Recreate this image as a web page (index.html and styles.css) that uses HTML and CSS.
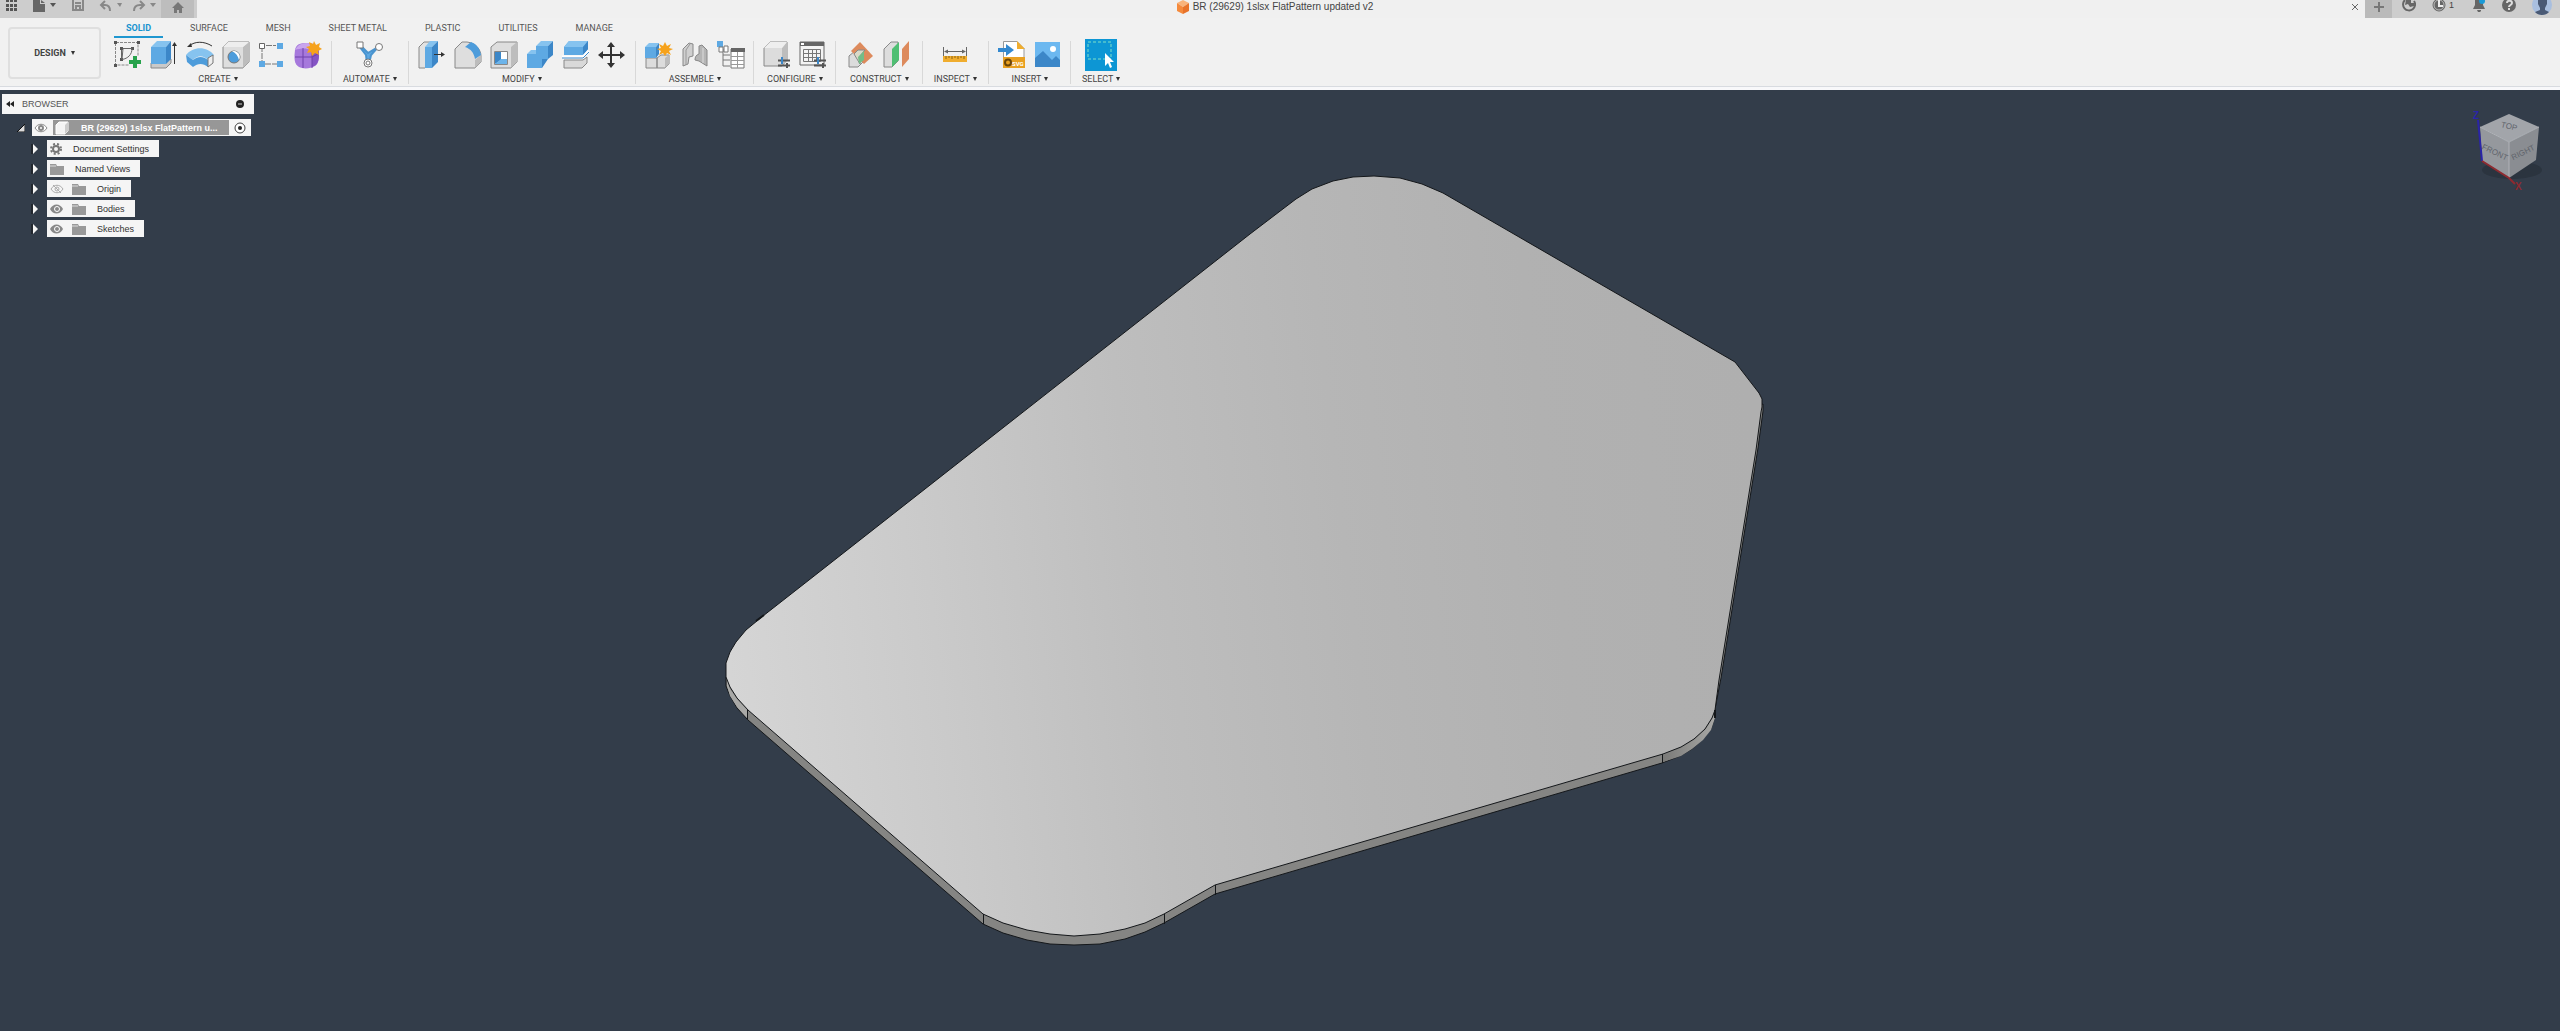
FILE: index.html
```html
<!DOCTYPE html>
<html lang="en">
<head>
<meta charset="utf-8">
<title>BR (29629) 1slsx FlatPattern updated v2</title>
<link rel="stylesheet" href="styles.css">
</head>
<body>
<header class="appbar">
  <div class="quick">
    <button class="tool" aria-label="Data panel"><svg width="14" height="18" viewBox="0 0 14 18" fill="#555"><path d="M1 0h3v2H1zM5 0h3v2H5zM9 0h3v2H9zM1 4h3v3H1zM5 4h3v3H5zM9 4h3v3H9zM1 8h3v3H1zM5 8h3v3H5zM9 8h3v3H9z"/></svg></button>
    <button class="tool" aria-label="File"><svg width="26" height="18" viewBox="0 0 26 18" fill="#666"><path d="M1 0h7v4h5v8H1zM9 0l4 3H9z"/><path d="M18 3h6l-3 4z" fill="#555"/></svg></button>
    <button class="tool" aria-label="Save"><svg width="14" height="18" viewBox="0 0 14 18" fill="none" stroke="#888" stroke-width="2"><path d="M2 0v10h10V0M4 3h6M5 10V6h4v4"/></svg></button>
    <div class="history">
      <button class="tool" aria-label="Undo"><svg width="26" height="18" viewBox="0 0 26 18"><path d="M7 1L3 5l4 4M3 5h4c4 0 5 2 5 6" fill="none" stroke="#888" stroke-width="2"/><path d="M19 3h5l-2 4z" fill="#888"/></svg></button>
      <button class="tool" aria-label="Redo"><svg width="26" height="18" viewBox="0 0 26 18"><path d="M8 1l4 4-4 4M12 5H8c-4 0-6 2-6 6" fill="none" stroke="#888" stroke-width="2"/><path d="M18 3h6l-3 4z" fill="#888"/></svg></button>
    </div>
  </div>
  <button class="home" aria-label="Home"><svg width="14" height="18" viewBox="0 0 14 18" fill="#777"><path d="M7 2l6 6h-2v5H8v-3H6v3H3V8H1z"/></svg></button>
  <div class="doc">
    <svg width="12" height="14" viewBox="0 0 12 14"><path d="M0 3l6-3 6 3-6 4z" fill="#f9b37a"/><path d="M0 3l6 4v7l-6-3z" fill="#f58a3c"/><path d="M12 3L6 7v7l6-3z" fill="#e8732a"/></svg>
    <h1 class="doc-name">BR (29629) 1slsx FlatPattern updated v2</h1>
  </div>
  <button class="close" aria-label="Close document"><svg width="8" height="8" viewBox="0 0 8 8" stroke="#666" fill="none"><path d="M1 1l6 6M7 1L1 7"/></svg></button>
  <button class="new" aria-label="New design"><svg width="12" height="12" viewBox="0 0 12 12" stroke="#777" stroke-width="2"><path d="M6 1v10M1 6h10"/></svg></button>
  <div class="account">
    <button class="tool" aria-label="Extensions"><svg width="14" height="18" viewBox="0 0 14 18"><path d="M3 0a6 6 0 1 0 9 1" fill="none" stroke="#666" stroke-width="2"/><path d="M4 0h5v3h3v3l-4 1-2-3-3 1z" fill="#666"/></svg></button>
    <button class="tool jobs" aria-label="Job status"><svg width="14" height="18" viewBox="0 0 14 18"><circle cx="7" cy="5" r="6" fill="#666" stroke="#666"/><circle cx="7" cy="5" r="5" fill="none" stroke="#bbb"/><path d="M7 0v6h4" fill="none" stroke="#eee" stroke-width="2"/></svg>1</button>
    <button class="tool" aria-label="Notifications"><svg width="14" height="18" viewBox="0 0 14 18"><path d="M3 0h8v5l2 4H1l2-4zM5 10h4v1l-1 1H6z" fill="#666"/><circle cx="10" cy="1" r="3" fill="#1a9ad7"/></svg></button>
    <button class="tool" aria-label="Help"><svg width="14" height="18" viewBox="0 0 14 18"><circle cx="7" cy="5" r="7" fill="#666"/><path d="M5 3c0-3 5-3 5 0 0 2-3 2-3 4M7 8v2" fill="none" stroke="#ddd" stroke-width="2"/></svg></button>
    <button class="tool" aria-label="Account"><svg width="20" height="18" viewBox="0 0 20 18"><circle cx="10" cy="5" r="10" fill="#a9bfdf"/><path d="M6 0h9v4l-2 4v2l4 2c-3 4-11 4-14 0l5-2V8L6 4z" fill="#4a5a75"/></svg></button>
  </div>
</header>

<section class="ribbon">
  <button class="workspace">DESIGN <span class="caret"></span></button>
  <div class="ribbon-main">
    <nav class="tabs">
      <a class="tab active" href="#solid">SOLID</a>
      <a class="tab" href="#surface">SURFACE</a>
      <a class="tab" href="#mesh">MESH</a>
      <a class="tab" href="#sheet">SHEET METAL</a>
      <a class="tab" href="#plastic">PLASTIC</a>
      <a class="tab" href="#utilities">UTILITIES</a>
      <a class="tab" href="#manage">MANAGE</a>
    </nav>
    <div class="groups">
      <div class="group roomy">
        <div class="icons">
          <button class="tool" aria-label="Create sketch"><svg width="28" height="28" viewBox="0 0 28 28"><path d="M2 1.500h22v14M1.500 2v22h14" fill="none" stroke="#888" stroke-dasharray="3 1"/><g fill="#555"><path d="M0 0h3v3H0zM23 0h3v3h-3zM0 23h3v3H0zM6 6h3v3H6zM17 6h3v3h-3zM6 17h3v3H6z"/></g><path d="M9 7.500h9c0 6-4 10-10 11zM7.500 9v9" fill="none" stroke="#666"/><path d="M19 15h4v4h4v4h-4v4h-4v-4h-4v-4h4z" fill="#27a34c"/></svg></button>
          <button class="tool" aria-label="Extrude"><svg width="28" height="28" viewBox="0 0 28 28"><path d="M1 22v5h15l5-5v-4H5z" fill="#c9c9c9" stroke="#888"/><path d="M1 6h15v17H1z" fill="#5ea9e3"/><path d="M1 6l6-6h14l-5 6z" fill="#86c3ef"/><path d="M16 6l5-6v18l-5 5z" fill="#3c87c8"/><path d="M24.500 23V3" stroke="#333" fill="none"/><path d="M22 5l2.500-4L27 5z" fill="#333"/></svg></button>
          <button class="tool" aria-label="Revolve"><svg width="28" height="28" viewBox="0 0 28 28"><path d="M3 5C9 0 18 0 26 5" fill="none" stroke="#333"/><path d="M1 6l4-4 1 4z" fill="#333"/><path d="M0 14c7-9 21-9 28 0l-6 5c-5-5-10-5-15 0z" fill="#86c3ef"/><path d="M0 14l7 5v7l-6-5zM7 19c5-4 10-4 15 0v7c-5-4-10-4-15 0z" fill="#4d9cdb"/><path d="M22 17l5-3v8l-5 4z" fill="#eee" stroke="#777"/></svg></button>
          <button class="tool" aria-label="Hole"><svg width="28" height="28" viewBox="0 0 28 28"><path d="M1 6l5-5h21v20l-6 6H1z" fill="#dedede" stroke="#888"/><path d="M21 6l6-5v20l-6 6z" fill="#bdbdbd"/><path d="M1 6l5-5h21l-6 5z" fill="#eee"/><circle cx="12" cy="16" r="6" fill="#4d9cdb" stroke="#777"/><path d="M12 10a6 6 0 0 1 5 9c-1-4-3-7-7-9z" fill="#fff"/></svg></button>
          <button class="tool" aria-label="Rectangular pattern"><svg width="28" height="28" viewBox="0 0 28 28"><path d="M4 5v18h18M8 4.500h10" fill="none" stroke="#777" stroke-dasharray="6 1"/><path d="M1.500 2.500h5v5h-5z" fill="#fff" stroke="#666"/><path d="M19 2h6v6h-6zM1 20h6v6H1zM19 20h6v6h-6z" fill="#5ea9e3"/></svg></button>
          <button class="tool" aria-label="Create form"><svg width="28" height="28" viewBox="0 0 28 28"><path d="M1 9c1-6 5-7 12-7s12 2 12 8c0 8 0 12-4 15-5 3-12 3-16 1-5-3-5-9-4-17z" fill="#a678dc"/><path d="M3 6c5-6 14-4 18-2l-3 5C12 7 7 7 1 9z" fill="#c9a5ee"/><path d="M18 9l4-4c4 5 4 14 0 19l-4 2z" fill="#8554c4"/><path d="M9 7v20M1 16h17l6-3M18 8v19" fill="none" stroke="#6e41ac"/><path d="M20 0l2 4 4-2-1 4 3 2-4 2 1 4-4-2-3 3-1-4-4 1 2-4-3-2 4-1-1-4 4 2z" fill="#f6a21b"/></svg></button>
        </div>
        <button class="label">CREATE <span class="caret"></span></button>
      </div>
      <div class="group mid roomy">
        <div class="icons">
          <button class="tool" aria-label="Automated modeling"><svg width="28" height="28" viewBox="0 0 28 28"><path d="M4 4l8 8 10-6-7 8-2 9h-2l-1-9-7-9z" fill="#5ea9e3" stroke="#4a94cf" stroke-width="2" stroke-linejoin="round"/><path d="M1 1h6v6H1z" fill="#fff" stroke="#777"/><circle cx="23" cy="6" r="3.500" fill="#fff" stroke="#777"/><circle cx="12" cy="22" r="4" fill="#fff" stroke="#777"/><circle cx="12" cy="22" r="2" fill="#fff" stroke="#777"/></svg></button>
        </div>
        <button class="label">AUTOMATE <span class="caret"></span></button>
      </div>
      <div class="group roomy">
        <div class="icons">
          <button class="tool" aria-label="Press pull"><svg width="28" height="28" viewBox="0 0 28 28"><path d="M1 6l5-5h7v20l-6 6H1z" fill="#e2e2e2" stroke="#888"/><path d="M7 6h7v21H7z" fill="#5ea9e3"/><path d="M7 6l5-6h8l-6 6z" fill="#86c3ef"/><path d="M14 6l6-6v21l-6 6z" fill="#3c87c8"/><path d="M16 13.500h8" stroke="#333"/><path d="M23 11l4 2.500-4 2.500z" fill="#333"/></svg></button>
          <button class="tool" aria-label="Fillet"><svg width="28" height="28" viewBox="0 0 28 28"><path d="M1 8l7-7h5c9 1 14 8 14 14v6l-6 6H1z" fill="#dedede" stroke="#888"/><path d="M21 19l6-5v7l-6 6z" fill="#bcbcbc"/><path d="M11 6l6-5c6 2 9 7 10 13l-6 4c-1-6-4-10-10-12z" fill="#4d9cdb"/></svg></button>
          <button class="tool" aria-label="Shell"><svg width="28" height="28" viewBox="0 0 28 28"><path d="M1 6l6-5h20v20l-6 6H1z" fill="#dedede" stroke="#888"/><path d="M21 6l6-5v20l-6 6z" fill="#bdbdbd"/><path d="M4.500 10.500h13v13h-13z" fill="#fff" stroke="#888"/><path d="M5 11h6v8l-6 4z" fill="#3c87c8"/><path d="M5 23l6-5h6v5z" fill="#6cb4ea"/></svg></button>
          <button class="tool" aria-label="Combine"><svg width="28" height="28" viewBox="0 0 28 28"><path d="M1 13h9V5h12v13h-6v9H1z" fill="#5ea9e3"/><path d="M10 5l5-5h12l-5 5zM1 13l4-4h5v4z" fill="#86c3ef"/><path d="M22 5l5-5v14l-5 4zM16 18h6l-6 9z" fill="#3c87c8"/></svg></button>
          <button class="tool" aria-label="Split body"><svg width="28" height="28" viewBox="0 0 28 28"><path d="M2 19h19l4-3v6l-5 5H2z" fill="#d9d9d9" stroke="#888"/><path d="M2 6l5-6h19v8l-5 6H2z" fill="#5ea9e3"/><path d="M2 6l5-6h19l-5 6z" fill="#86c3ef"/><path d="M21 6l5-6v8l-5 6z" fill="#3c87c8"/><path d="M0 16h21l6-6" fill="none" stroke="#fff" stroke-width="3"/><path d="M0 17h21l6-6" fill="none" stroke="#3c87c8"/></svg></button>
          <button class="tool" aria-label="Move"><svg width="28" height="28" viewBox="0 0 28 28"><path d="M13 3v21M3 14h21" stroke="#333" stroke-width="2"/><path d="M9 6l4-5 4 5zM9 22l4 5 4-5zM5 10l-5 4 5 4zM22 10l5 4-5 4z" fill="#333"/></svg></button>
        </div>
        <button class="label">MODIFY <span class="caret"></span></button>
      </div>
      <div class="group">
        <div class="icons">
          <button class="tool" aria-label="New component"><svg width="28" height="28" viewBox="0 0 28 28"><path d="M1 17h11v10H1zM12 17l4-3h8v9l-4 4h-8z" fill="#dcdcdc" stroke="#888"/><path d="M20 17l4-3v9l-4 4z" fill="#bbb"/><path d="M0 6h11v11H0z" fill="#5ea9e3"/><path d="M0 6l4-4h10l-3 4z" fill="#86c3ef"/><path d="M11 6l3-4v11l-3 4z" fill="#3c87c8"/><path d="M20 1l2 4 4-2-2 4 4 1-4 2 2 4-4-2-2 3-2-3-4 2 2-4-4-2 4-1-2-4 4 2z" fill="#f6a21b"/></svg></button>
          <button class="tool" aria-label="Joint"><svg width="28" height="28" viewBox="0 0 28 28"><path d="M2 25V8l6-6 4 1v12l-4 1-1 7z" fill="#cfcfcf" stroke="#888"/><path d="M26 25V9l-5-5-3 1v8c-3 1-4 3-4 6l4 1z" fill="#b5b5b5" stroke="#888"/><path d="M5 24V9l4-6" fill="none" stroke="#999"/><path d="M22 22V7" stroke="#ddd"/></svg></button>
          <button class="tool" aria-label="Bill of materials"><svg width="28" height="28" viewBox="0 0 28 28"><path d="M6 8v17h7M6 14h7M6 19h7" fill="none" stroke="#777"/><path d="M0 0h6v6H0z" fill="#5ea9e3"/><path d="M2 6h4v5H2zM7 5h4v6H7z" fill="#fff" stroke="#777"/><path d="M14 8h13v19H14z" fill="#fff" stroke="#777"/><path d="M14 7h14v4H14z" fill="#666"/><path d="M14 15.500h13M14 19.500h13M14 23.500h13M20.500 11v16" stroke="#999"/></svg></button>
        </div>
        <button class="label">ASSEMBLE <span class="caret"></span></button>
      </div>
      <div class="group">
        <div class="icons">
          <button class="tool" aria-label="Configure model"><svg width="28" height="28" viewBox="0 0 28 28"><path d="M1 7l6-6h17v18l-5 6H1z" fill="#dcdcdc" stroke="#888"/><path d="M19 7l5-6v18l-5 6z" fill="#bdbdbd"/><path d="M1 7l6-6h17l-5 6z" fill="#eee"/><path d="M15 19.500h12M15 24.500h12" stroke="#555" stroke-width="2"/><path d="M19 16v7" stroke="#3c87c8" stroke-width="2"/><path d="M24 22v5" stroke="#555" stroke-width="2"/></svg></button>
          <button class="tool" aria-label="Configuration table"><svg width="28" height="28" viewBox="0 0 28 28"><path d="M1 1h24v23H1z" fill="#f4f4f4" stroke="#666"/><path d="M1 1h24v4H1z" fill="#666"/><path d="M2 2h3v2H2z" fill="#fff"/><path d="M4.500 8.500h17v12h-17zM4 12.500h18M4 16.500h18M9.500 8v12M13.500 8v12M17.500 8v12" fill="none" stroke="#777"/><path d="M15 19.500h12M15 24.500h12" stroke="#555" stroke-width="2"/><path d="M19 16v7" stroke="#3c87c8" stroke-width="2"/><path d="M24 22v5" stroke="#555" stroke-width="2"/></svg></button>
        </div>
        <button class="label">CONFIGURE <span class="caret"></span></button>
      </div>
      <div class="group wide">
        <div class="icons">
          <button class="tool" aria-label="Offset plane"><svg width="28" height="28" viewBox="0 0 28 28"><path d="M2 15l6-5h8v11l-5 5H2z" fill="#dcdcdc" stroke="#888"/><path d="M4 10L13 1l13 14-9 8z" fill="#dd8a5c"/><path d="M7 13l4-4h7l-5 6v8z" fill="#d9d9c8" stroke="#888"/><path d="M11 16l6-6v9l-5 4z" fill="#74bd88"/></svg></button>
          <button class="tool" aria-label="Midplane"><svg width="28" height="28" viewBox="0 0 28 28"><path d="M1 8l7-7h7v19l-6 6H1z" fill="#ddd" stroke="#888"/><path d="M9 8l7-7v18l-7 7z" fill="#4fbf73"/><path d="M19 8l7-8v18l-7 8z" fill="#dd8a5c"/></svg></button>
        </div>
        <button class="label">CONSTRUCT <span class="caret"></span></button>
      </div>
      <div class="group mid">
        <div class="icons">
          <button class="tool" aria-label="Measure"><svg width="28" height="28" viewBox="0 0 28 28"><path d="M2.500 6v9M25.500 6v9M4 10.500h20" stroke="#666"/><path d="M3 10.500l4-2v4zM25 10.500l-4-2v4z" fill="#666"/><path d="M2 15h24v6H2z" fill="#f0ad2e"/><path d="M5 15v3M8 15v2M11 15v3M14 15v2M17 15v3M20 15v2M23 15v3" stroke="#8c6310"/></svg></button>
        </div>
        <button class="label">INSPECT <span class="caret"></span></button>
      </div>
      <div class="group">
        <div class="icons">
          <button class="tool" aria-label="Insert SVG"><svg width="28" height="28" viewBox="0 0 28 28"><path d="M5.500.500H19l7 7V26H5.500z" fill="#fff" stroke="#999"/><path d="M19 0v8h8z" fill="#f0ad2e"/><path d="M0 7h8V3l8 6-8 6v-4H0z" fill="#3489cf"/><path d="M5 16h22v11H5z" fill="#e9a020"/><circle cx="10" cy="21.500" r="3" fill="none" stroke="#6b4608" stroke-width="2"/><text class="svg-tag" x="14" y="25">SVG</text></svg></button>
          <button class="tool" aria-label="Canvas"><svg width="28" height="28" viewBox="0 0 28 28"><path d="M1 1h25v25H1z" fill="#6cb8f0"/><path d="M1 17l8-7 9 9 4-4 4 4v7H1z" fill="#3c87c8"/><circle cx="19" cy="8" r="3" fill="#fff"/></svg></button>
        </div>
        <button class="label">INSERT <span class="caret"></span></button>
      </div>
      <div class="group mid last">
        <div class="icons">
          <button class="tool select" aria-label="Select"><svg width="32" height="32" viewBox="0 0 32 32"><path d="M0 0h32v32H0z" fill="#0d96d4"/><path d="M3 3h23v17H3z" fill="none" stroke="#7fe0c8" stroke-dasharray="3 2"/><path d="M20 14v13l3-3 2 5 2-1-2-5h4z" fill="#fff"/></svg></button>
        </div>
        <button class="label">SELECT <span class="caret"></span></button>
      </div>
    </div>
  </div>
</section>

<main class="viewport">
  <svg class="model" viewBox="0 90 2560 941" role="img" aria-label="Flat pattern body">
    <defs>
      <linearGradient id="face" gradientUnits="userSpaceOnUse" x1="727" y1="650" x2="1762" y2="530">
        <stop offset="0" stop-color="#d5d5d5"/><stop offset="0.200" stop-color="#cacaca"/><stop offset="0.400" stop-color="#bebebe"/><stop offset="0.600" stop-color="#b6b6b6"/><stop offset="0.800" stop-color="#b1b1b1"/><stop offset="1" stop-color="#afafaf"/>
      </linearGradient>
      <linearGradient id="round" x1="0" x2="1"><stop offset="0" stop-color="#7a7a78"/><stop offset="1" stop-color="#a8a8a6"/></linearGradient>
    </defs>
    <g stroke="#14171a" stroke-width="1" stroke-linejoin="round">
      <path fill="#858583" d="M726 677v9l4 10 7 12 11 12 235 204 20 9 24 7 23 4 24 1 26-1 25-5 20-7 19-9 51-29 447-131 18-7 12-7 11-10 8-10 4-12v-8l6-31 37-230 5-37V404z"/>
      <path fill="#a9a9a7" stroke="none" d="M727 679l3 10 7 10 11 12v8l-11-12-7-11-3-10z"/>
      <path fill="url(#round)" stroke="none" d="M1663 755l18-7 13-8 11-10 7-11 3-6v5l-4 12-8 10-11 9-11 7-18 6z"/>
      <path fill="url(#face)" d="M763 616l-17 14-10 12-6 10-4 11v14l4 10 7 11 11 12 235 204 20 9 24 7 23 4 24 2 26-2 25-5 20-6 19-9 51-29 448-131 18-7 13-8 11-10 7-11 3-8 4-30 37-230 5-38 1-5v-8l-3-6-24-31-292-169-21-9-22-6-26-2-21 1-20 4-21 8-16 10-46 35-441 346z"/>
      <path fill="none" d="M747.500 710v10M983.500 914v10M1164.500 914v10M1215.500 885v10M1662.500 754v9"/>
      <path fill="none" stroke-width="2" d="M756 621l8-6M1715 710v8"/>
    </g>
  </svg>

  <aside class="browser">
    <div class="browser-head">
      <button class="tool" aria-label="Collapse"><svg width="8" height="6" viewBox="0 0 8 6" fill="#222"><path d="M4 0v6L0 3zM8 0v6L4 3z"/></svg></button>
      <h2 class="browser-title">BROWSER</h2>
      <button class="tool" aria-label="Hide panel"><svg width="8" height="8" viewBox="0 0 8 8"><circle cx="4" cy="4" r="4" fill="#222"/><path d="M2 4h4" stroke="#ccc"/></svg></button>
    </div>
    <div class="root">
      <svg class="open" width="8" height="8" viewBox="0 0 8 8"><path d="M8 0v8H0z" fill="#ddd" stroke="#111"/></svg>
      <div class="root-chip">
        <svg width="14" height="10" viewBox="0 0 14 10"><path d="M1 5c3-5 9-5 12 0-3 5-9 5-12 0z" fill="#fff" stroke="#888"/><circle cx="7" cy="5" r="2" fill="none" stroke="#888" stroke-width="2"/></svg>
        <div class="root-name">
          <svg width="14" height="14" viewBox="0 0 14 14"><path d="M1 4l3-3h9v9l-3 3H1z" fill="#f4f4f4" stroke="#fff"/><path d="M10 4v9l3-3V1z" fill="#ccc"/></svg>
          <span>BR (29629) 1slsx FlatPattern u...</span>
        </div>
        <svg width="12" height="12" viewBox="0 0 12 12"><circle cx="6" cy="6" r="5" fill="#fff" stroke="#444"/><circle cx="6" cy="6" r="2" fill="#222"/></svg>
      </div>
    </div>
    <ul class="tree">
      <li class="node"><svg class="arrow" width="8" height="10" viewBox="0 0 8 10"><path d="M1 0v10" stroke="#111"/><path d="M2 0l5 5-5 5z" fill="#f4f4f4"/></svg>
        <span class="chip"><svg width="12" height="12" viewBox="0 0 12 12"><circle cx="6" cy="6" r="3" fill="none" stroke="#777" stroke-width="2"/><circle cx="6" cy="6" r="5" fill="none" stroke="#777" stroke-width="2" stroke-dasharray="2 2"/></svg><span class="name">Document Settings</span></span></li>
      <li class="node"><svg class="arrow" width="8" height="10" viewBox="0 0 8 10"><path d="M1 0v10" stroke="#111"/><path d="M2 0l5 5-5 5z" fill="#f4f4f4"/></svg>
        <span class="chip"><svg width="14" height="12" viewBox="0 0 14 12"><path d="M0 1h6l1 2h7v9H0z" fill="#999"/><path d="M0 3h6" stroke="#ddd"/></svg><span class="name">Named Views</span></span></li>
      <li class="node"><svg class="arrow" width="8" height="10" viewBox="0 0 8 10"><path d="M1 0v10" stroke="#111"/><path d="M2 0l5 5-5 5z" fill="#f4f4f4"/></svg>
        <span class="chip"><svg width="14" height="10" viewBox="0 0 14 10"><path d="M1 5c3-5 9-5 12 0-3 5-9 5-12 0zM3 1l8 8" fill="none" stroke="#aaa"/><circle cx="7" cy="5" r="2" fill="none" stroke="#aaa"/></svg><svg class="folder" width="14" height="12" viewBox="0 0 14 12"><path d="M0 1h6l1 2h7v9H0z" fill="#999"/><path d="M0 3h6" stroke="#ddd"/></svg><span class="name">Origin</span></span></li>
      <li class="node"><svg class="arrow" width="8" height="10" viewBox="0 0 8 10"><path d="M1 0v10" stroke="#111"/><path d="M2 0l5 5-5 5z" fill="#f4f4f4"/></svg>
        <span class="chip"><svg width="14" height="10" viewBox="0 0 14 10"><path d="M0 5c3-6 10-6 13 0-3 6-10 6-13 0z" fill="#888"/><circle cx="7" cy="5" r="2.500" fill="#888" stroke="#fff"/></svg><svg class="folder" width="14" height="12" viewBox="0 0 14 12"><path d="M0 1h6l1 2h7v9H0z" fill="#999"/><path d="M0 3h6" stroke="#ddd"/></svg><span class="name">Bodies</span></span></li>
      <li class="node"><svg class="arrow" width="8" height="10" viewBox="0 0 8 10"><path d="M1 0v10" stroke="#111"/><path d="M2 0l5 5-5 5z" fill="#f4f4f4"/></svg>
        <span class="chip"><svg width="14" height="10" viewBox="0 0 14 10"><path d="M0 5c3-6 10-6 13 0-3 6-10 6-13 0z" fill="#888"/><circle cx="7" cy="5" r="2.500" fill="#888" stroke="#fff"/></svg><svg class="folder" width="14" height="12" viewBox="0 0 14 12"><path d="M0 1h6l1 2h7v9H0z" fill="#999"/><path d="M0 3h6" stroke="#ddd"/></svg><span class="name">Sketches</span></span></li>
    </ul>
  </aside>

  <svg class="viewcube" width="80" height="96" viewBox="0 0 80 96" role="img" aria-label="View cube">
    <ellipse cx="42" cy="66" rx="30" ry="9" fill="#2b343f"/>
    <path d="M39 10l30 13-30 15L10 23z" fill="#a2a5aa"/>
    <path d="M10 23l29 15v36L12 57z" fill="#95989d"/>
    <path d="M69 23L39 38v36l27-18z" fill="#8a8d92"/>
    <path d="M10 23l29 15 30-15M39 38v36" fill="none" stroke="#b0b3b8"/>
    <path d="M8 16l4 41" stroke="#2a24a8" stroke-width="2"/>
    <path d="M12 57l27 17 6 6" fill="none" stroke="#8e2a30" stroke-width="2"/>
    <g class="cube-face">
      <text x="39" y="25" text-anchor="middle" transform="rotate(14 39 23)">TOP</text>
      <text x="25" y="51" text-anchor="middle" transform="rotate(26 25 48)">FRONT</text>
      <text x="53" y="51" text-anchor="middle" transform="rotate(-26 53 48)">RIGHT</text>
    </g>
    <text class="axis z" x="3" y="15">Z</text>
    <text class="axis x" x="45" y="86">X</text>
  </svg>
</main>
</body>
</html>
```
FILE: styles.css
```css
* { box-sizing: border-box; }
body {
  margin: 0;
  min-height: 100vh;
  display: flex;
  flex-direction: column;
  background: #333d4a;
  color: #444;
  font-family: "Liberation Sans", Arial, sans-serif;
  font-size: 9px;
  line-height: 10px;
}
button {
  margin: 0;
  padding: 0;
  border: 0;
  background: none;
  color: inherit;
  font: inherit;
}
svg { display: block; flex: none; }
h1, h2 { margin: 0; font-weight: normal; }

/* Application bar */
.appbar { display: flex; height: 18px; background: #f0f0f0; }
.quick { display: flex; gap: 13px; padding: 0 3px 0 5px; background: #cdcdcd; }
.history { display: flex; gap: 8px; }
.home {
  display: flex;
  justify-content: center;
  width: 36px;
  background: #bdbdbd;
  border-right: 3px solid #cdcdcd;
}
.doc {
  flex: 1;
  display: flex;
  align-items: center;
  justify-content: center;
  gap: 4px;
  padding: 0 0 4px 8px;
}
.doc-name { font-size: 10px; line-height: 14px; color: #444; }
.close { padding: 0 6px 4px; display: flex; align-items: center; }
.new {
  display: flex;
  align-items: center;
  justify-content: center;
  width: 27px;
  padding-bottom: 4px;
  background: #bababa;
}
.account { display: flex; gap: 16px; padding: 0 8px 0 10px; background: #cdcdcd; }
.jobs { display: flex; gap: 3px; width: 24px; }

/* Ribbon */
.ribbon {
  display: flex;
  gap: 4px;
  padding: 9px 8px 3px;
  background: #f1f1f1;
  border-bottom: 3px solid #f8f8fa;
  box-shadow: inset 0 -1px #d8dbe0;
  font-family: Roboto, sans-serif;
}
.workspace {
  display: flex;
  align-items: center;
  justify-content: center;
  gap: 5px;
  width: 93px;
  height: 52px;
  border: 2px solid #dfdfdf;
  border-radius: 4px;
  font-weight: bold;
}
.caret {
  border: 2px solid transparent;
  border-top: 4px solid #333;
  border-bottom: 0;
}
.ribbon-main { display: flex; flex-direction: column; gap: 3px; margin-top: -4px; }
.tabs { display: flex; gap: 16px; padding-left: 9px; }
.tab {
  padding: 0 11px 3px;
  height: 15px;
  border-bottom: 2px solid transparent;
  color: #555;
  text-decoration: none;
}
.tab.active {
  padding: 0 12px 3px;
  color: #1793cf;
  border-color: #1f97d0;
  font-weight: bold;
}
.groups { display: flex; }
.group {
  display: flex;
  flex-direction: column;
  align-items: center;
  gap: 5px;
  padding: 0 8px 0 9px;
  border-right: 1px solid #d8d8d8;
}
.group.roomy { padding-right: 9px; }
.group.mid { padding: 0 11px; }
.group.wide { width: 87px; }
.group.last { border: 0; }
.icons { display: flex; gap: 8px; height: 28px; }
.label { display: flex; align-items: center; gap: 3px; }
.select { margin: -2px 0; }
.svg-tag { font-size: 6px; font-weight: bold; fill: #fff; }

/* Modelling canvas and what floats over it */
.viewport { position: relative; flex: 1; display: flex; min-height: 400px; }
.model { width: 100%; flex: 1; }
.browser { position: absolute; top: 4px; left: 2px; width: 252px; color: #333; }
.browser-head {
  display: flex;
  align-items: center;
  height: 20px;
  gap: 8px;
  padding: 0 10px 0 4px;
  background: #f5f5f5;
}
.browser-title { flex: 1; font-size: 9px; color: #555; }
.root { display: flex; align-items: center; gap: 7px; margin: 5px 3px 4px 15px; }
.root-chip {
  flex: 1;
  display: flex;
  align-items: center;
  gap: 5px;
  height: 17px;
  padding: 0 5px 0 2px;
  background: #f5f5f5;
}
.root-name {
  flex: 1;
  display: flex;
  align-items: center;
  gap: 12px;
  height: 15px;
  padding-left: 2px;
  background: #979797;
  color: #fff;
  font-weight: bold;
  white-space: nowrap;
}
.tree {
  display: flex;
  flex-direction: column;
  gap: 3px;
  margin: 0;
  padding: 0 0 0 29px;
  list-style: none;
}
.node { display: flex; align-items: center; gap: 8px; }
.chip {
  display: flex;
  align-items: center;
  height: 17px;
  padding: 0 10px 0 3px;
  background: #f5f5f5;
}
.folder { margin-left: 8px; }
.name { margin-left: 11px; }

.viewcube { position: absolute; top: 14px; right: 10px; }
.cube-face { font-size: 8px; fill: #60646b; }
.axis { font-size: 10px; font-weight: bold; }
.axis.z { fill: #2a24a8; }
.axis.x { fill: #8e2a30; }
```
